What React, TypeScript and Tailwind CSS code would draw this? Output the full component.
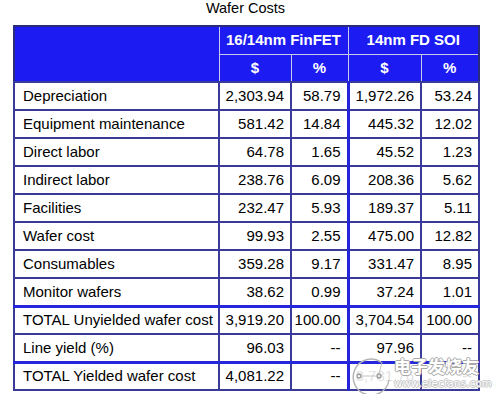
import React from 'react';

type Row = { label: string; a: string; ap: string; b: string; bp: string; sep?: boolean };

const ROWS: Row[] = [
  { label: 'Depreciation', a: '2,303.94', ap: '58.79', b: '1,972.26', bp: '53.24' },
  { label: 'Equipment maintenance', a: '581.42', ap: '14.84', b: '445.32', bp: '12.02' },
  { label: 'Direct labor', a: '64.78', ap: '1.65', b: '45.52', bp: '1.23' },
  { label: 'Indirect labor', a: '238.76', ap: '6.09', b: '208.36', bp: '5.62' },
  { label: 'Facilities', a: '232.47', ap: '5.93', b: '189.37', bp: '5.11' },
  { label: 'Wafer cost', a: '99.93', ap: '2.55', b: '475.00', bp: '12.82' },
  { label: 'Consumables', a: '359.28', ap: '9.17', b: '331.47', bp: '8.95' },
  { label: 'Monitor wafers', a: '38.62', ap: '0.99', b: '37.24', bp: '1.01' },
  { label: 'TOTAL Unyielded wafer cost', a: '3,919.20', ap: '100.00', b: '3,704.54', bp: '100.00', sep: true },
  { label: 'Line yield (%)', a: '96.03', ap: '--', b: '97.96', bp: '--' },
  { label: 'TOTAL Yielded wafer cost', a: '4,081.22', ap: '--', b: '3,781.76', bp: '--', sep: true },
];

export default function App() {
  return (
    <div className="relative w-[500px] h-[401px] bg-white pl-[13px] font-['Liberation_Sans',Arial,sans-serif] text-black">
      <div className="w-[465px] text-center text-[14.5px] leading-[17px] h-[25px]">Wafer Costs</div>

      <table className="w-[465px] table-fixed border-collapse border-2 border-[#2b2b7e]">
        <colgroup>
          <col className="w-[205px]" />
          <col className="w-[72px]" />
          <col className="w-[57px]" />
          <col className="w-[73px]" />
          <col className="w-[58px]" />
        </colgroup>
        <thead>
          <tr className="h-[28px]">
            <th rowSpan={2} className="bg-[#1c1cf2] border border-[#c8c8e8] border-l-0 border-t-0" />
            <th colSpan={2} className="bg-[#1c1cf2] border border-[#c8c8e8] border-t-0 text-white font-bold text-[15px] text-center">
              16/14nm FinFET
            </th>
            <th colSpan={2} className="bg-[#1c1cf2] border border-[#c8c8e8] border-t-0 border-r-0 text-white font-bold text-[15px] text-center">
              14nm FD SOI
            </th>
          </tr>
          <tr className="h-[28px]">
            <th className="bg-[#1c1cf2] border border-[#c8c8e8] text-white font-bold text-[15px]">$</th>
            <th className="bg-[#1c1cf2] border border-[#c8c8e8] text-white font-bold text-[15px]">%</th>
            <th className="bg-[#1c1cf2] border border-[#c8c8e8] text-white font-bold text-[15px]">$</th>
            <th className="bg-[#1c1cf2] border border-[#c8c8e8] border-r-0 text-white font-bold text-[15px]">%</th>
          </tr>
        </thead>
        <tbody className="text-[15px]">
          {ROWS.map((r, i) => {
            const top = r.sep ? 'border-t-[3px] border-t-[#2626dc]' : '';
            const last = i === ROWS.length - 1;
            return (
              <tr key={r.label} className="h-[28px]">
                <td className={`border-2 border-[#3a3a98] pl-[8px] whitespace-nowrap ${top}`}>{r.label}</td>
                <td className={`border-2 border-[#3a3a98] pr-[6px] text-right ${top}`}>{r.a}</td>
                <td className={`border-2 border-[#3a3a98] pr-[6px] text-right border-r-[3px] border-r-[#2424d8] ${top}`}>{r.ap}</td>
                <td className={`border-2 border-[#3a3a98] pr-[6px] text-right ${top} ${last ? 'text-[#e2e2e2]' : ''}`}>{r.b}</td>
                <td className={`border-2 border-[#3a3a98] pr-[6px] text-right ${top} ${last ? 'text-[#e2e2e2]' : ''}`}>{r.bp}</td>
              </tr>
            );
          })}
        </tbody>
      </table>

      {/* watermark */}
      <div className="absolute left-[351px] top-[356px] flex items-start pointer-events-none">
        <svg width="42" height="38" viewBox="0 0 42 38">
          <path d="M30 6 A18 18 0 1 0 38 24" fill="none" stroke="#b5b5b5" strokeWidth="1.5" />
          <circle cx="8" cy="20" r="2" fill="none" stroke="#9a9a9a" strokeWidth="1.3" />
          <circle cx="28" cy="20" r="2" fill="none" stroke="#9a9a9a" strokeWidth="1.3" />
          <path d="M10 20 L26 20 M28 18 L31 6" fill="none" stroke="#c4c4c4" strokeWidth="1" />
        </svg>
        <div className="flex flex-col ml-[1px]">
          <span className="text-[17px] leading-[19px] font-bold text-white font-['Noto_Sans_CJK_SC',sans-serif] [text-shadow:-1px_0_#a8a8a8,1px_0_#a8a8a8,0_-1px_#a8a8a8,0_1px_#a8a8a8]">
            电子发烧友
          </span>
          <span className="text-[10px] leading-[12px] mt-[3px] tracking-[0.3px] text-white font-['DejaVu_Sans',sans-serif] [text-shadow:-1px_0_#c4c4c4,1px_0_#c4c4c4,0_-1px_#c4c4c4,0_1px_#c4c4c4]">
            www.elecfans.com
          </span>
        </div>
      </div>
    </div>
  );
}
